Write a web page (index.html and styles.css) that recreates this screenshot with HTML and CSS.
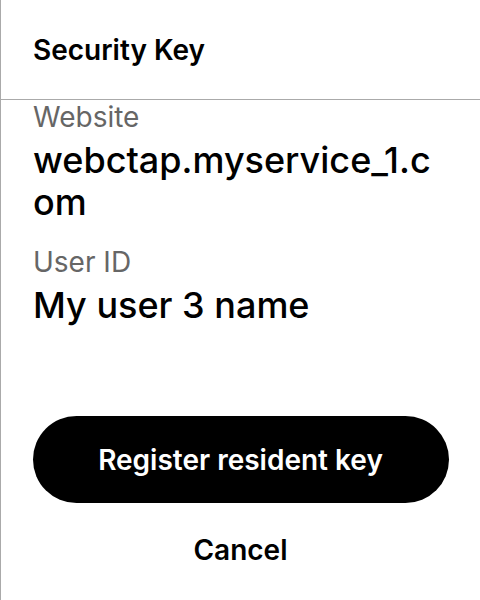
FILE: index.html
```html
<!DOCTYPE html>
<html lang="en">
<head>
    <meta charset="UTF-8">
    <meta name="viewport" content="width=device-width, initial-scale=1.0">
    <title>Security Key</title>
    <link rel="stylesheet" href="styles.css">
</head>
<body>
    <div class="sheet">
        <div class="sheet-header">
            <h1>Security Key</h1>
        </div>
        <div class="sheet-body">
            <div class="field">
                <p class="field-label">Website</p>
                <p class="field-value">webctap.myservice_1.com</p>
            </div>
            <div class="field">
                <p class="field-label">User ID</p>
                <p class="field-value">My user 3 name</p>
            </div>
        </div>
        <div class="sheet-actions">
            <button class="btn-primary">Register resident key</button>
            <button class="btn-cancel">Cancel</button>
        </div>
    </div>
</body>
</html>
```

FILE: styles.css
```css
body {
    margin: 0;
    padding: 0;
    font-family: Inter, "Noto Sans", sans-serif;
    background: #fff;
    color: #000;
}
.sheet {
    height: 600px;
    box-sizing: border-box;
    border-left: 1px solid #aaa;
    display: flex;
    flex-direction: column;
}
.sheet-header {
    height: 99px;
    border-bottom: 1px solid #aaa;
    display: flex;
    align-items: center;
    padding: 0 32px;
}
.sheet-header h1 {
    margin: 0;
    font-size: 28px;
    font-weight: 600;
}
.sheet-body {
    padding: 1px 32px 0;
}
.field {
    margin-bottom: 23px;
}
.field-label {
    margin: 0 0 6px;
    font-size: 28px;
    line-height: 32px;
    color: #666;
}
.field-value {
    margin: 0;
    font-size: 36px;
    line-height: 42px;
    font-weight: 500;
    word-break: break-all;
}
.sheet-actions {
    margin-top: auto;
    display: flex;
    flex-direction: column;
    align-items: center;
    padding: 0 32px 33px;
}
.btn-primary {
    width: 416px;
    height: 87px;
    border: none;
    border-radius: 44px;
    background: #000;
    color: #fff;
    font-family: inherit;
    font-size: 28px;
    font-weight: 600;
    cursor: pointer;
}
.btn-cancel {
    margin-top: 30px;
    border: none;
    background: none;
    color: #000;
    font-family: inherit;
    font-size: 28px;
    line-height: 34px;
    font-weight: 600;
    padding: 0 16px;
    cursor: pointer;
}
```
